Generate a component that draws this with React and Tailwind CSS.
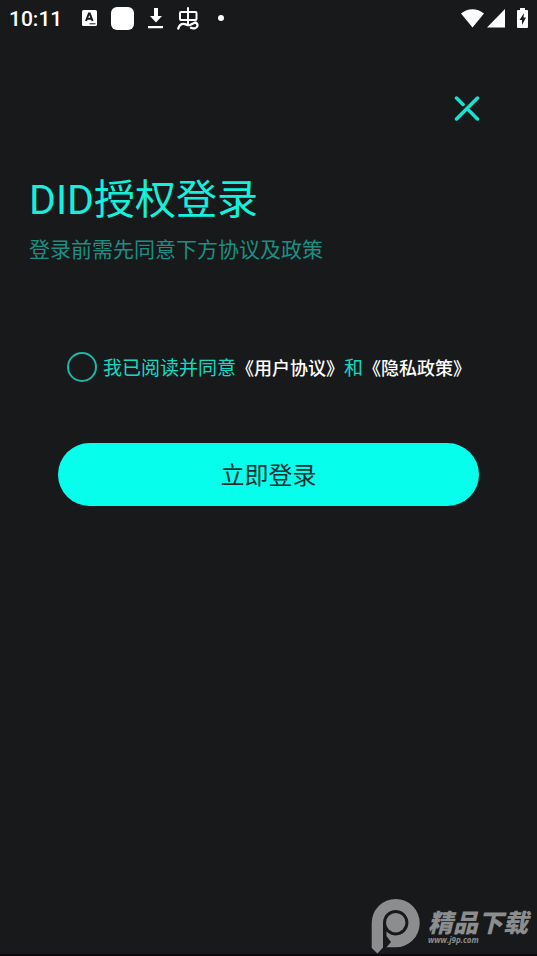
import React from 'react';

function StatusBar() {
  return (
    <header className="flex h-9 items-center justify-between px-[9px] text-white">
      <div className="flex items-center">
        <span className="w-[73px] pt-px text-[21px] leading-6 font-medium font-['Roboto',sans-serif]">10:11</span>
        <svg className="h-4 w-4" viewBox="0 0 16 16" aria-hidden="true">
          <rect width="15" height="16" rx="1.5" fill="#fff" />
          <path d="M4 11 6.900 3.500h.8L10.600 11M5 8.800h4.600" fill="none" stroke="#18191b" strokeWidth="2" />
          <path d="M7.500 13.800h6" stroke="#18191b" strokeWidth="1" />
        </svg>
        <span className="ml-[13px] h-[23px] w-[23px] rounded-md bg-white" />
        <svg className="ml-[14px] h-[21px] w-4" viewBox="0 0 16 21" fill="#fff" aria-hidden="true">
          <path d="M6 0h4v8h4l-6 6.500L2 8h4zM0 18h15v2.200H0z" />
        </svg>
        <svg className="ml-[13px] h-6 w-[22px]" viewBox="0 0 22 24" fill="none" stroke="#fff" strokeWidth="2" strokeLinecap="round" strokeLinejoin="round" aria-hidden="true">
          <path d="M11 2v15.500M4 6h14.500a1 1 0 0 1 1 1v6a1 1 0 0 1-1 1H4a1 1 0 0 1-1-1V7a1 1 0 0 1 1-1z" />
          <path d="M1.300 22.500c.7-3.200 2.700-4.700 5.200-4.700 3 0 3.500 2.200 6.500 1.200l5-2.500c2 .3 2.800 2 2.400 3.500-.6 2.500-4.400 3-6.400 1.800" strokeWidth="2.300" />
        </svg>
        <span className="ml-[19px] h-[6px] w-[6px] rounded-full bg-white" />
      </div>
      <div className="flex items-center">
        <svg className="h-[19px] w-[23px]" viewBox="0 0 23 19" fill="#fff" aria-hidden="true">
          <path d="M0 4.500C7-1.300 16-1.300 23 4.500L11.500 18.500z" />
        </svg>
        <svg className="ml-[3px] h-[19px] w-[18px]" viewBox="0 0 18 19" fill="#fff" aria-hidden="true">
          <path d="M18 0v18.500H0z" />
        </svg>
        <svg className="ml-3 h-5 w-[11px]" viewBox="0 0 11 20" aria-hidden="true">
          <path d="M3 0h5v2h2q1 0 1 1v16q0 1-1 1H1q-1 0-1-1V3q0-1 1-1h2z" fill="#fff" />
          <path d="M7 5 2.500 12H5v5l4-7.500H6.500z" fill="#18191b" />
        </svg>
      </div>
    </header>
  );
}

function Watermark() {
  return (
    <div className="flex items-start gap-2 text-[#8c8d8e]">
      <svg className="h-[55px] w-[49px]" viewBox="0 0 49 55" aria-hidden="true">
        <path
          fill="currentColor"
          d="M24.700 0A24 24.150 0 0 1 24.700 48.300H15.500L20 43 15.500 37V32.500A12.700 12.700 0 1 0 12 23.700V48.500L6.500 54.500 .7 49V24A24 24 0 0 1 24.700 0z"
        />
        <circle cx="24.700" cy="23.700" r="9.700" fill="currentColor" />
      </svg>
      <div className="pt-2 italic">
        <p className="text-[25px] leading-7 font-black font-['Noto_Sans_CJK_SC',sans-serif]">精品下载</p>
        <p className="text-[8px] leading-[10px] font-bold font-['Open_Sans',sans-serif]">www.j9p.com</p>
      </div>
    </div>
  );
}

export default function App() {
  return (
    <div className="flex min-h-screen flex-col border-b-2 border-[#0e090e] bg-[#18191b] font-['Roboto','Noto_Sans_CJK_SC',sans-serif]">
      <StatusBar />

      <main className="flex flex-col">
        {/* Close */}
        <div className="flex justify-end pt-[60px] pr-[57px]">
          <button type="button" aria-label="关闭" className="text-[#16e3d0]">
            <svg className="h-[26px] w-[26px]" viewBox="0 0 26 26" fill="none" stroke="currentColor" strokeWidth="3.500" strokeLinecap="round">
              <path d="M2.500 2l6.500 6.500M23.500 2L2.500 23M14.500 14L23.500 23" />
            </svg>
          </button>
        </div>

        {/* Heading */}
        <div className="px-[29px] pt-[54px]">
          <h1 className="text-[41px] leading-12 text-[#14f0dc]">DID授权登录</h1>
          <p className="mt-3 text-[21px] leading-7 text-[#1c8f83]">登录前需先同意下方协议及政策</p>
        </div>

        {/* Agreement */}
        <div className="mt-[86px] flex items-center px-[67px] whitespace-nowrap text-[19px] leading-[30px] text-[#17d9c3]">
          <input
            id="agree"
            type="checkbox"
            className="mr-[6px] h-[30px] w-[30px] shrink-0 appearance-none rounded-full border-2 border-[#1fb5a5] checked:bg-[#05ffec]"
          />
          <div className="flex items-center pt-1">
            <label htmlFor="agree">我已阅读并同意</label>
            <a href="#terms" className="text-[18px] font-medium text-white">《用户协议》</a>
            <span>和</span>
            <a href="#privacy" className="text-[18px] font-medium text-white">《隐私政策》</a>
          </div>
        </div>

        {/* Submit */}
        <div className="px-[58px] pt-[59px]">
          <button type="button" className="w-full rounded-full bg-[#05ffec] pt-[17px] pb-[14px] text-2xl text-[#17302f]">
            立即登录
          </button>
        </div>
      </main>

      <footer className="mt-auto flex justify-end pr-[9px]">
        <Watermark />
      </footer>
    </div>
  );
}
